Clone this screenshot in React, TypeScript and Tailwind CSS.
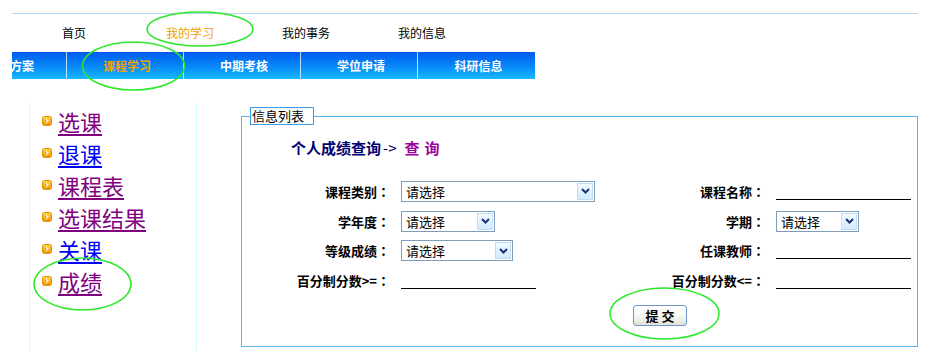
import React from "react";

const Bullet = () => (
  <svg width="10" height="10" viewBox="0 0 10 10" className="shrink-0">
    <defs>
      <linearGradient id="bg" x1="0" y1="0" x2="0" y2="1">
        <stop offset="0" stopColor="#ffd84a" />
        <stop offset="1" stopColor="#f08a00" />
      </linearGradient>
    </defs>
    <rect x="0.5" y="0.5" width="9" height="9" rx="2" fill="url(#bg)" stroke="#e89000" strokeWidth="1" />
    <path d="M4 3 L6 5 L4 7" fill="none" stroke="#fff6d0" strokeWidth="1.3" />
  </svg>
);

const Select = ({ w }: { w: string }) => (
  <div className={`${w} h-[21px] border border-[#7f9db9] bg-white flex items-center justify-between`}>
    <span className="pl-[4px] text-[13px] leading-none text-black">请选择</span>
    <span className="mr-[1px] w-[16px] h-[17px] border border-[#c3dcf5] bg-linear-to-b from-[#f2faff] to-[#d3ebff] flex items-center justify-center">
      <svg width="9" height="6" viewBox="0 0 9 6">
        <path d="M1 1 L4.5 4.5 L8 1" fill="none" stroke="#1d2f7a" strokeWidth="2" />
      </svg>
    </span>
  </div>
);

const Line = () => <div className="w-[135px] h-[17px] border-b border-black" />;

const Label = ({ children }: { children: React.ReactNode }) => (
  <div className="text-right text-[13px] font-bold text-black leading-none whitespace-nowrap">
    {children}
    <span className="font-['Noto_Sans_CJK_TC',sans-serif]">：</span>
  </div>
);

export default function App() {
  const side = [
    { t: "选课", c: "text-[#800080] decoration-[#800080]" },
    { t: "退课", c: "text-[#0000ff] decoration-[#0000ff]" },
    { t: "课程表", c: "text-[#800080] decoration-[#800080]" },
    { t: "选课结果", c: "text-[#800080] decoration-[#800080]" },
    { t: "关课", c: "text-[#0000ff] decoration-[#0000ff]" },
    { t: "成绩", c: "text-[#800080] decoration-[#800080]" },
  ];
  return (
    <div className="relative w-[933px] h-[357px] bg-white overflow-hidden font-['SimSun','Noto_Sans_CJK_SC',sans-serif]">
      <div className="pt-[13px]">
        <div className="ml-[12px] w-[906px] border-t border-[#b5d8f5]">
          <div className="h-[38px] flex items-center pl-[4px] text-[12px] text-black">
            <div className="w-[116px] text-center">首页</div>
            <div className="w-[116px] text-center text-[#f0a000]">我的学习</div>
            <div className="w-[116px] text-center">我的事务</div>
            <div className="w-[116px] text-center">我的信息</div>
          </div>
        </div>
        <div className="ml-[12px] w-[523px] h-[27px] overflow-hidden bg-linear-to-b from-[#0658ee] via-[#0a86f8] to-[#19b8ff]">
          <div className="flex h-full ml-[-62px] text-[12px] font-bold text-white">
            {["培养方案", "课程学习", "中期考核", "学位申请", "科研信息"].map((t, i) => (
              <div
                key={t}
                className={`w-[117px] shrink-0 h-full pl-[4px] flex items-center justify-center whitespace-nowrap ${i < 4 ? "border-r border-[#b8e0ff]" : ""} ${i === 1 ? "text-[#f5a300]" : ""}`}
              >
                {t}
              </div>
            ))}
          </div>
        </div>
        <div className="flex mt-[24px]">
          <div className="ml-[29px] w-[168px] h-[247px] border-x border-[#d2f8ff] pt-[2px] pl-[12px]">
            {side.map((s) => (
              <div key={s.t} className="h-[32px] flex items-center gap-[6px]">
                <Bullet />
                <span className={`text-[22px] leading-none underline underline-offset-[3px] decoration-[1.5px] ${s.c}`}>{s.t}</span>
              </div>
            ))}
          </div>
          <fieldset className="ml-[44px] mt-[4px] w-[677px] h-[240px] border border-[#5ab4ec] p-0 m-0 min-w-0">
            <legend className="ml-[8px] w-[64px] h-[18px] pl-[1px] border border-[#3c9ce8] text-[13px] leading-[16px] text-black">信息列表</legend>
            <div className="pl-[49px] mt-[12px] h-[20px] flex items-center text-[15px] font-bold leading-none whitespace-pre">
              <span className="text-[#000070]">个人成绩查询</span>
              <span className="text-[#000070] font-normal ml-[2px]">-&gt;</span>
              <span className="text-[#a000a0] ml-[8px]">查</span>
              <span className="text-[#a000a0] ml-[5px]">询</span>
            </div>
            <div className="mt-[19px] grid grid-cols-[148px_200px_153px_135px] gap-x-[11px] grid-rows-[30px_30px_29px_30px] items-center">
              <Label>课程类别</Label>
              <Select w="w-[194px]" />
              <Label>课程名称</Label>
              <Line />
              <Label>学年度</Label>
              <Select w="w-[94px]" />
              <Label>学期</Label>
              <Select w="w-[83px]" />
              <Label>等级成绩</Label>
              <Select w="w-[112px]" />
              <Label>任课教师</Label>
              <Line />
              <Label>百分制分数&gt;=</Label>
              <Line />
              <Label>百分制分数&lt;=</Label>
              <Line />
            </div>
            <div className="mt-[7px] pl-[391px]">
              <button className="w-[54px] h-[21px] rounded-[3px] border border-[#6f95c9] bg-linear-to-b from-white via-[#f7f7f4] to-[#e2e2dc] text-[13px] font-bold text-black leading-none">
                提 交
              </button>
            </div>
          </fieldset>
        </div>
      </div>
      <svg className="absolute inset-0 pointer-events-none" width="933" height="357">
        <g fill="none" stroke="#2be82b" strokeWidth="1.5">
          <ellipse cx="200" cy="29" rx="53" ry="17" />
          <ellipse cx="133.5" cy="66" rx="51" ry="24" />
          <ellipse cx="82.5" cy="284" rx="48.5" ry="26" />
          <ellipse cx="664.5" cy="313.5" rx="54.5" ry="25.5" />
        </g>
      </svg>
    </div>
  );
}
